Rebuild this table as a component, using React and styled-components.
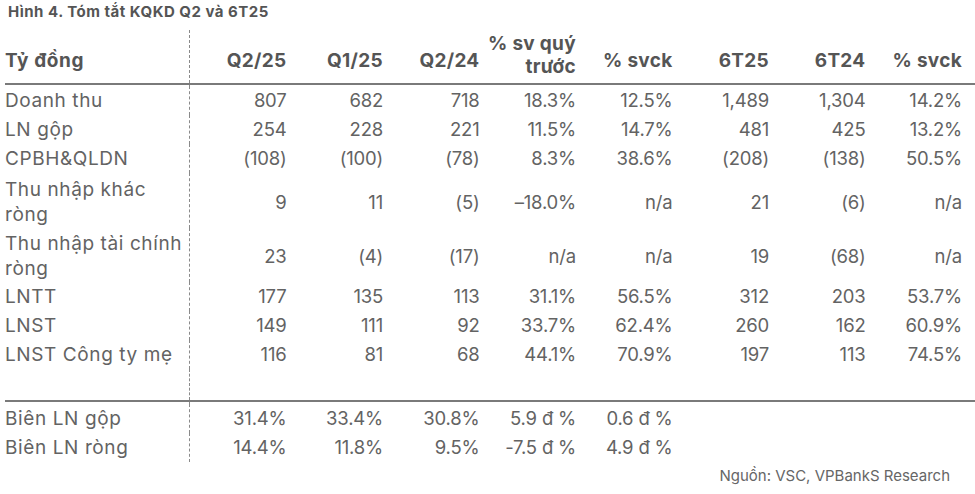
import React from "react";
import styled, { createGlobalStyle } from "styled-components";

const Global = createGlobalStyle`
  html, body { margin: 0; padding: 0; background: #fff; }
  *, *::before, *::after { box-sizing: border-box; }
  body { font-family: "Inter", "Noto Sans", sans-serif; color: #636363; }
`;

const Page = styled.div`
  width: 975px;
  height: 494px;
  padding: 0 0 0 5px;
  display: flex;
  flex-direction: column;
`;

const Title = styled.div`
  margin-left: 3px;
  font-size: 15px;
  font-weight: 700;
  letter-spacing: 0.5px;
  line-height: 24px;
  color: #555;
  margin-bottom: 6px;
`;

const COLS = "185px repeat(8, 96.5px)";

const Row = styled.div`
  display: grid;
  grid-template-columns: ${COLS};
  border-bottom: ${(p) => (p.$rule ? "2px solid #7a7a7a" : "none")};
  font-size: 18px;
  font-weight: ${(p) => (p.$head ? 700 : 400)};
  color: ${(p) => (p.$head ? "#555" : "#636363")};
  line-height: ${(p) => p.$lh || 29}px;
`;

const Label = styled.div`
  border-right: 1px dashed #8a8a8a;
  padding-top: ${(p) => p.$pt || 0}px;
  padding-bottom: ${(p) => p.$pb || 0}px;
  height: ${(p) => (p.$h ? p.$h + "px" : "auto")};
  display: flex;
  flex-direction: column;
  justify-content: ${(p) => (p.$end ? "flex-end" : "flex-start")};
  font-size: 19px;
  letter-spacing: 0.6px;
  white-space: nowrap;
`;

const Cell = styled.div`
  text-align: right;
  display: flex;
  flex-direction: column;
  justify-content: ${(p) => (p.$end ? "flex-end" : "center")};
  padding-top: ${(p) => p.$pt || 0}px;
  padding-bottom: ${(p) => p.$pb || 0}px;
  font-size: ${(p) => (p.$head ? "19px" : "18.5px")};
  letter-spacing: ${(p) => (p.$head ? "0.3px" : "-0.2px")};
  white-space: nowrap;
`;

const Source = styled.div`
  align-self: flex-end;
  margin-top: 5px;
  margin-right: 25px;
  font-size: 15px;
  line-height: 18px;
  color: #666;
`;

const main = [
  ["Doanh thu", "807", "682", "718", "18.3%", "12.5%", "1,489", "1,304", "14.2%"],
  ["LN gộp", "254", "228", "221", "11.5%", "14.7%", "481", "425", "13.2%"],
  ["CPBH&QLDN", "(108)", "(100)", "(78)", "8.3%", "38.6%", "(208)", "(138)", "50.5%"],
  [["Thu nhập khác", "ròng"], "9", "11", "(5)", "–18.0%", "n/a", "21", "(6)", "n/a"],
  [["Thu nhập tài chính", "ròng"], "23", "(4)", "(17)", "n/a", "n/a", "19", "(68)", "n/a"],
  ["LNTT", "177", "135", "113", "31.1%", "56.5%", "312", "203", "53.7%"],
  ["LNST", "149", "111", "92", "33.7%", "62.4%", "260", "162", "60.9%"],
  ["LNST Công ty mẹ", "116", "81", "68", "44.1%", "70.9%", "197", "113", "74.5%"],
];

const margins = [
  ["Biên LN gộp", "31.4%", "33.4%", "30.8%", "5.9 đ %", "0.6 đ %", "", "", ""],
  ["Biên LN ròng", "14.4%", "11.8%", "9.5%", "-7.5 đ %", "4.9 đ %", "", "", ""],
];

const heads = ["Q2/25", "Q1/25", "Q2/24", ["% sv quý", "trước"], "% svck", "6T25", "6T24", "% svck"];

function DataRow({ r, pt }) {
  const [label, ...vals] = r;
  const multi = Array.isArray(label);
  return (
    <Row $lh={multi ? 25 : 29}>
      <Label $pt={multi ? pt : 0} $pb={multi ? 1 : 0}>
        {multi ? label.map((l) => <span key={l}>{l}</span>) : label}
      </Label>
      {vals.map((v, i) => (
        <Cell key={i} $pt={multi ? pt : 0} $pb={multi ? 1 : 0}>{v}</Cell>
      ))}
    </Row>
  );
}

export default function App() {
  return (
    <>
      <Global />
      <Page>
        <Title>Hình 4. Tóm tắt KQKD Q2 và 6T25</Title>
        <Row $head $rule $lh={23}>
          <Label $h={53} $end $pb={11}>Tỷ đồng</Label>
          {heads.map((h, i) =>
            Array.isArray(h) ? (
              <Cell key={i} $head $end $pb={5}>
                {h.map((l) => <span key={l}>{l}</span>)}
              </Cell>
            ) : (
              <Cell key={i} $head $end $pb={11}>{h}</Cell>
            )
          )}
        </Row>
        <Row $lh={1}>
          <Label $h={1} />
        </Row>
        {main.map((r, i) => (
          <DataRow key={i} r={r} pt={i === 3 ? 4 : 3} />
        ))}
        <Row $rule $lh={31}>
          <Label $h={31} />
        </Row>
        <Row $lh={2}>
          <Label $h={2} />
        </Row>
        {margins.map((r, i) => (
          <DataRow key={i} r={r} />
        ))}
        <Source>Nguồn: VSC, VPBankS Research</Source>
      </Page>
    </>
  );
}
